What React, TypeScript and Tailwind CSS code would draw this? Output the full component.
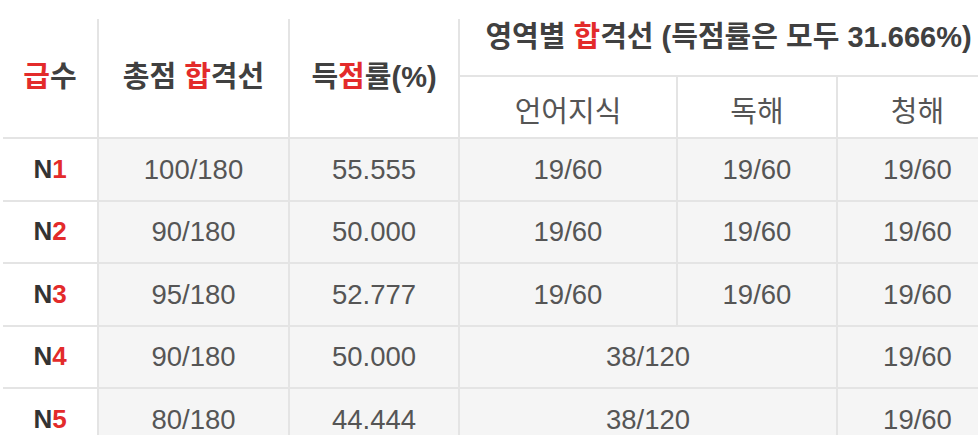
const rows = [
  { n: "1", total: "100/180", rate: "55.555", lang: "19/60", read: "19/60", listen: "19/60" },
  { n: "2", total: "90/180", rate: "50.000", lang: "19/60", read: "19/60", listen: "19/60" },
  { n: "3", total: "95/180", rate: "52.777", lang: "19/60", read: "19/60", listen: "19/60" },
  { n: "4", total: "90/180", rate: "50.000", merged: "38/120", listen: "19/60" },
  { n: "5", total: "80/180", rate: "44.444", merged: "38/120", listen: "19/60" },
];

const cell = "border-b-2 border-r-2 border-[#e4e4e4] text-center align-middle";
const head = `${cell} text-[29px] font-bold text-[#404040]`;
const body = `${cell} bg-[#f5f5f5] text-[27.5px] font-normal text-[#555]`;

export default function App() {
  return (
    <div
      className="w-[978px] h-[435px] overflow-hidden bg-white pt-[19px] pl-[3px]"
      style={{ fontFamily: '"Liberation Sans", "Noto Sans CJK KR", sans-serif' }}
    >
      <table className="table-fixed border-collapse w-[995px]">
        <colgroup>
          <col className="w-[95px]" />
          <col className="w-[191px]" />
          <col className="w-[170px]" />
          <col className="w-[218px]" />
          <col className="w-[160px]" />
          <col className="w-[161px]" />
        </colgroup>
        <thead>
          <tr className="h-[57px]">
            <th rowSpan={2} className={head}>
              <span className="text-[#e32b2b]">급</span>수
            </th>
            <th rowSpan={2} className={head}>
              총점 <span className="text-[#e32b2b]">합</span>격선
            </th>
            <th rowSpan={2} className={head}>
              득<span className="text-[#e32b2b]">점</span>률(%)
            </th>
            <th colSpan={3} className={`${head} whitespace-nowrap !align-top pt-0 leading-[36px]`}>
              영역별 <span className="text-[#e32b2b]">합</span>격선 (득점률은 모두 31.666%)
            </th>
          </tr>
          <tr className="h-[62px]">
            <th className={`${cell} text-[29px] font-normal text-[#555] pt-[12px]`}>언어지식</th>
            <th className={`${cell} text-[29px] font-normal text-[#555] pt-[12px]`}>독해</th>
            <th className={`${cell} text-[29px] font-normal text-[#555] pt-[12px]`}>청해</th>
          </tr>
        </thead>
        <tbody>
          {rows.map((r) => (
            <tr key={r.n} className="h-[62.5px]">
              <td className={`${cell} bg-white text-[26px] font-bold text-[#333]`}>
                N<span className="text-[#e32b2b]">{r.n}</span>
              </td>
              <td className={body}>{r.total}</td>
              <td className={body}>{r.rate}</td>
              {r.merged ? (
                <td colSpan={2} className={body}>
                  {r.merged}
                </td>
              ) : (
                <>
                  <td className={body}>{r.lang}</td>
                  <td className={body}>{r.read}</td>
                </>
              )}
              <td className={body}>{r.listen}</td>
            </tr>
          ))}
        </tbody>
      </table>
    </div>
  );
}
